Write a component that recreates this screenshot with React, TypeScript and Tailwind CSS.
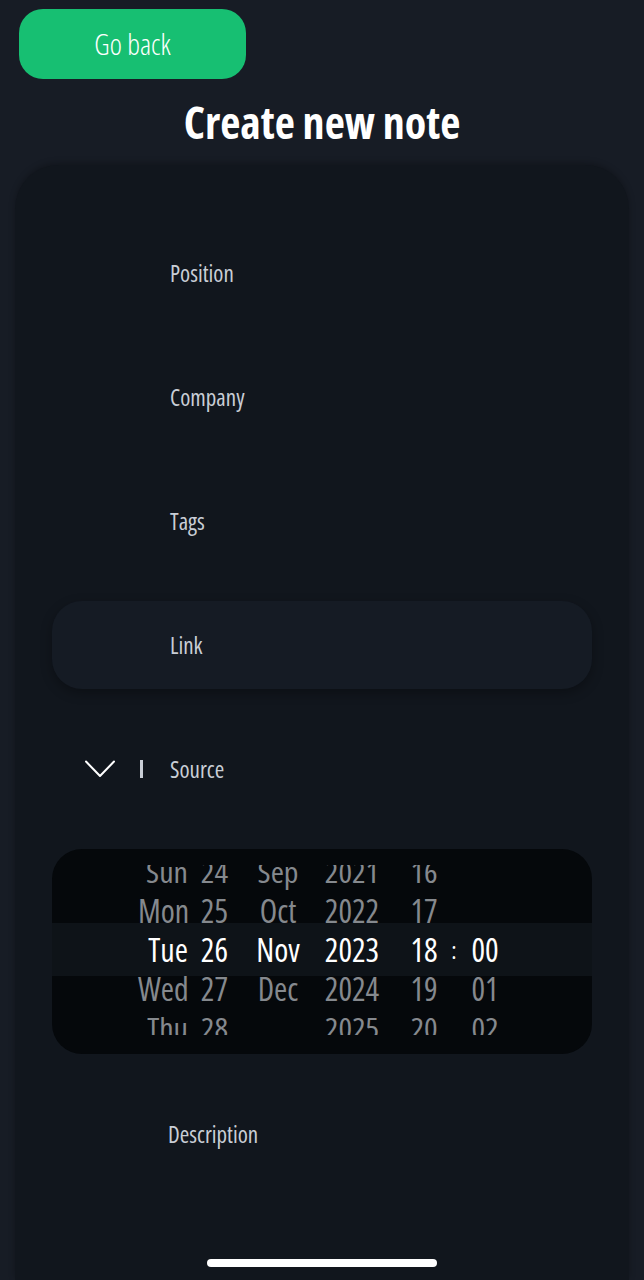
const FONT = "font-['Open_Sans','Noto_Sans',sans-serif] font-stretch-[75%]";

const rows = [
  { d: 'Sun', n: '24', m: 'Sep', y: '2021', h: '16', mi: '' },
  { d: 'Mon', n: '25', m: 'Oct', y: '2022', h: '17', mi: '' },
  { d: 'Tue', n: '26', m: 'Nov', y: '2023', h: '18', mi: '00' },
  { d: 'Wed', n: '27', m: 'Dec', y: '2024', h: '19', mi: '01' },
  { d: 'Thu', n: '28', m: '', y: '2025', h: '20', mi: '02' },
];

function Field({ label, active }: { label: string; active?: boolean }) {
  return (
    <div
      className={`mx-[37px] h-[88px] rounded-[30px] flex items-center pl-[118px] ${
        active ? 'bg-[#151b24] shadow-[0_4px_12px_rgba(0,0,0,0.3)]' : ''
      }`}
    >
      <span className="text-[23px] text-[#c9ced6]">{label}</span>
    </div>
  );
}

function DatePicker() {
  return (
    <div className="mx-[37px] h-[205px] rounded-[30px] bg-[#05080b] relative overflow-hidden">
      {/* selected band */}
      <div className="absolute inset-x-0 top-[74px] h-[53px] bg-[#0e1318]" />
      <div className="relative mt-[16px] h-[170px] overflow-hidden">
        <div className="-mt-[13px]">
          {rows.map((r, i) => {
            const sel = i === 2;
            const squish = i === 0 || i === 4 ? 'scale-y-[0.9]' : '';
            return (
              <div
                key={i}
                className={`h-[39px] flex items-center pl-[86px] text-[32px] ${squish} ${
                  sel ? 'text-white' : 'text-[#85898e]'
                }`}
              >
                <span className="w-[50px] text-right">{r.d}</span>
                <span className="ml-[12px] w-[28px] text-right">{r.n}</span>
                <span className="ml-[20px] w-[60px] text-center">{r.m}</span>
                <span className="ml-[9px] w-[70px] text-center">{r.y}</span>
                <span className="ml-[17px] w-[40px] text-center">{r.h}</span>
                <span className="ml-[4px] w-[12px] text-center text-[24px]">{sel ? ':' : ''}</span>
                <span className="ml-[7px] w-[36px] text-center">{r.mi}</span>
              </div>
            );
          })}
        </div>
      </div>
    </div>
  );
}

export default function App() {
  return (
    <div className={`relative h-[1280px] bg-[#171c25] flex flex-col overflow-hidden ${FONT}`}>
      <button className="ml-[19px] mt-[9px] w-[227px] h-[70px] rounded-[24px] bg-[#17bf72] text-white text-[29px] font-light flex items-center justify-center">
        Go back
      </button>

      <h1 className="mt-[21px] text-center text-white text-[44px] font-bold leading-none">
        Create new note
      </h1>

      <div className="mt-[21px] mx-[15px] flex-1 rounded-t-[44px] bg-[#11161d] shadow-[0_-2px_6px_rgba(0,0,0,0.25)] pt-[64px] flex flex-col gap-[36px]">
        <Field label="Position" />
        <Field label="Company" />
        <Field label="Tags" />
        <Field label="Link" active />

        <div className="mx-[37px] h-[88px] flex items-center">
          <svg className="ml-[33px]" width="30" height="18" viewBox="0 0 30 18" fill="none">
            <polyline points="1,1.5 15,16 29,1.5" stroke="white" strokeWidth="2" strokeLinecap="round" strokeLinejoin="round" />
          </svg>
          <span className="ml-[25px] w-[3px] h-[18px] bg-[#c9ced6]" />
          <span className="ml-[27px] text-[23px] text-[#c9ced6]">Source</span>
        </div>

        <DatePicker />

        <div className="mx-[37px] h-[88px] flex items-center pl-[116px]">
          <span className="text-[23px] text-[#c9ced6]">Description</span>
        </div>
      </div>

      <div className="absolute left-[207px] top-[1259px] w-[230px] h-[8px] rounded-full bg-white" />
    </div>
  );
}
